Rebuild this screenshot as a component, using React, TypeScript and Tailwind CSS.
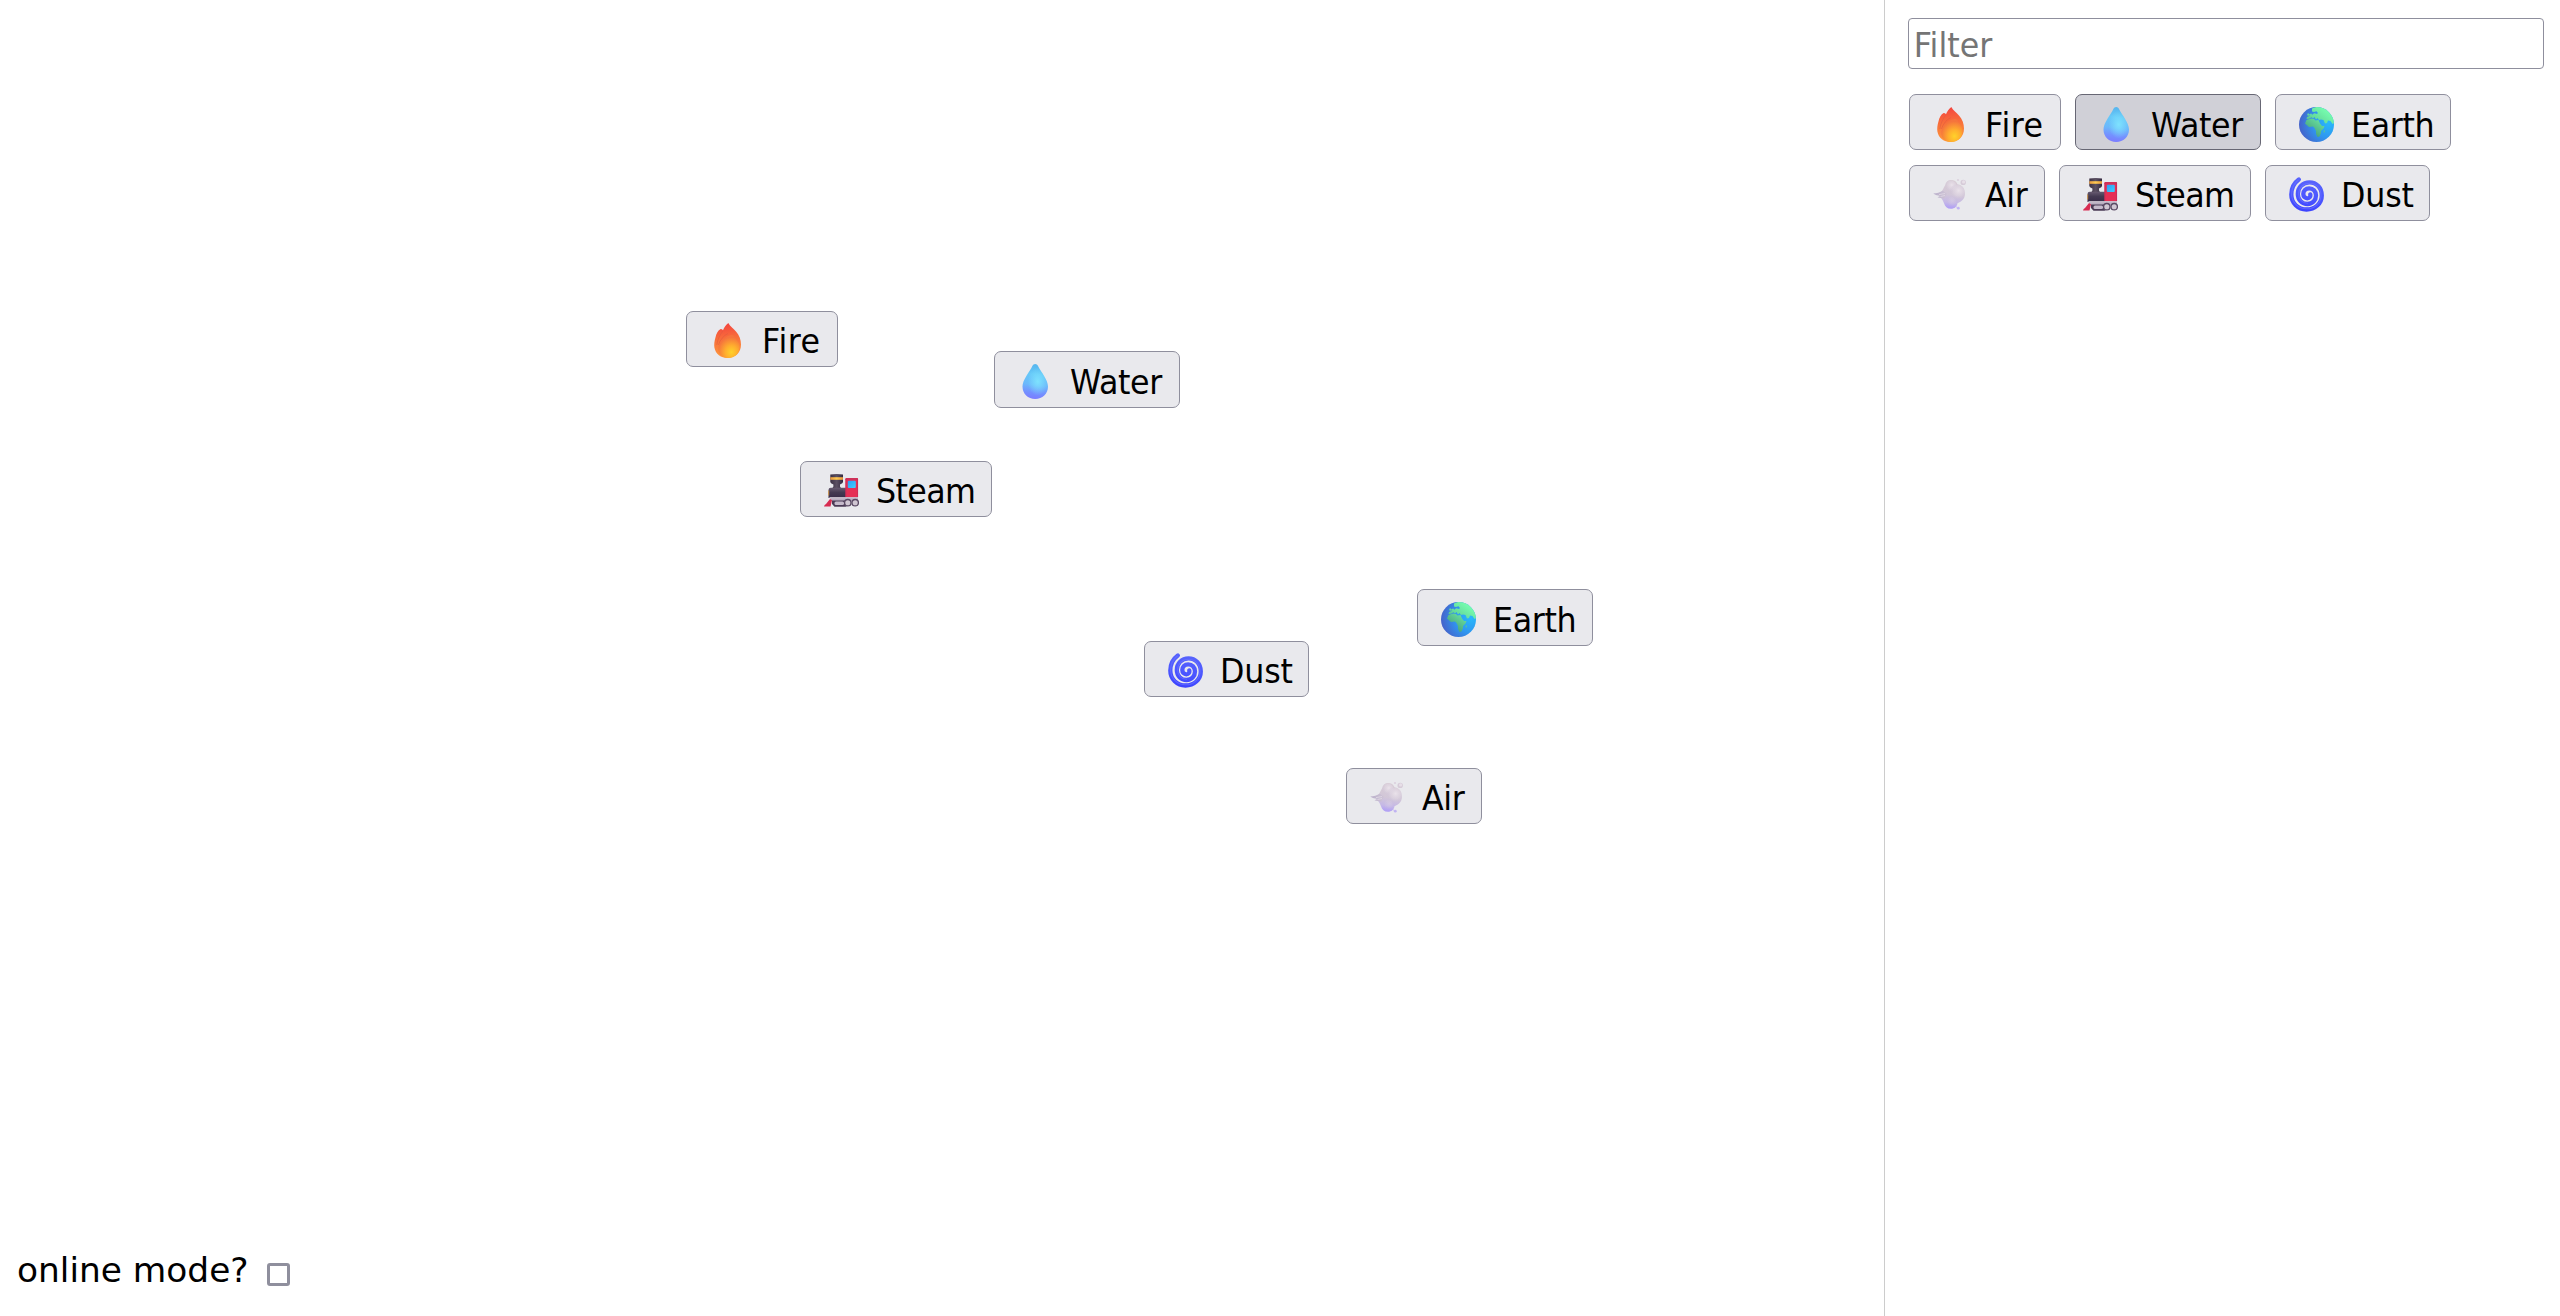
import { useState } from "react";

type Kind = "Fire" | "Water" | "Earth" | "Air" | "Steam" | "Dust";

function Emoji({ kind, uid }: { kind: Kind; uid: string }) {
  const id = (n: string) => `${uid}-${n}`;
  const url = (n: string) => `url(#${uid}-${n})`;
  switch (kind) {
    case "Fire":
      return (
        <svg viewBox="0 0 35 35" className="block size-[35px] shrink-0">
          <defs>
            <linearGradient id={id("a")} x1="0.5" y1="0" x2="0.6" y2="1">
              <stop offset="0" stopColor="#f4443f" />
              <stop offset="0.45" stopColor="#f8703a" />
              <stop offset="1" stopColor="#ff9c3c" />
            </linearGradient>
            <radialGradient id={id("b")} cx="0.62" cy="0.75" r="0.65">
              <stop offset="0" stopColor="#ffd22a" />
              <stop offset="0.45" stopColor="#ffae2e" />
              <stop offset="1" stopColor="#f5743c" />
            </radialGradient>
          </defs>
          <path d="M18.300 0C16 2 14 4.500 13 7.300c-.6-.8-1.300-1.200-2.300-1.200C8 7.500 6.300 10.500 5.600 14 4.300 18 4 21.500 4.400 24.500 5.500 31 11 35 17.500 35 25.500 35 31 29.500 31 21.500c0-5-1.800-9-4.800-12.700C23.500 5.500 20.300 3.500 18.300 0z" fill={url("a")} />
          <path d="M12.800 8c-3 4-5.300 8.500-6 14M18 10.500c-4.500 2-8 6.500-9.500 11.500" fill="none" stroke="#de5a40" strokeWidth="0.900" opacity="0.6" />
          <path d="M19.500 12.500C13 15 8.300 20.500 8.300 26c0 4.800 4 9 9.700 9 6.500 0 11.300-4 11.500-11 .2-5-3-6.500-5-10.500-1.500-1.800-3-1.800-5-1z" fill={url("b")} />
        </svg>
      );
    case "Water":
      return (
        <svg viewBox="0 0 35 35" className="block size-[35px] shrink-0">
          <defs>
            <linearGradient id={id("a")} x1="0.55" y1="0" x2="0.45" y2="1">
              <stop offset="0" stopColor="#56b5ee" />
              <stop offset="0.3" stopColor="#66c8f8" />
              <stop offset="0.6" stopColor="#6cb8fb" />
              <stop offset="0.82" stopColor="#7491ff" />
              <stop offset="1" stopColor="#7b7cff" />
            </linearGradient>
            <radialGradient id={id("b")} cx="0.6" cy="0.5" r="0.4">
              <stop offset="0" stopColor="#80e6ff" stopOpacity="0.9" />
              <stop offset="1" stopColor="#80e6ff" stopOpacity="0" />
            </radialGradient>
          </defs>
          <path d="M17.200 0c-1.300 0-2.100.7-2.700 1.800C11.500 8 4.500 16 4.500 22.500 4.500 29.800 10 35 17.200 35S30 29.800 30 22.500C30 16 23 8 19.900 1.800 19.300.7 18.500 0 17.200 0z" fill={url("a")} />
          <path d="M17.200 0c-1.300 0-2.100.7-2.700 1.800C11.500 8 4.500 16 4.500 22.500 4.500 29.800 10 35 17.200 35S30 29.800 30 22.500C30 16 23 8 19.900 1.800 19.300.7 18.500 0 17.200 0z" fill={url("b")} />
        </svg>
      );
    case "Earth":
      return (
        <svg viewBox="0 0 35 35" className="block size-[35px] shrink-0">
          <defs>
            <radialGradient id={id("a")} cx="0.85" cy="0.45" r="0.85">
              <stop offset="0" stopColor="#28b9fb" />
              <stop offset="0.5" stopColor="#2f97f0" />
              <stop offset="1" stopColor="#4562ca" />
            </radialGradient>
            <linearGradient id={id("b")} x1="30" y1="4" x2="14" y2="26" gradientUnits="userSpaceOnUse">
              <stop offset="0" stopColor="#77ffb0" />
              <stop offset="0.5" stopColor="#66dc9c" />
              <stop offset="1" stopColor="#4ba982" />
            </linearGradient>
            <clipPath id={id("c")}>
              <circle cx="17.500" cy="17.500" r="17.500" />
            </clipPath>
          </defs>
          <circle cx="17.500" cy="17.500" r="17.500" fill={url("a")} />
          <g clipPath={url("c")} fill={url("b")}>
            <path d="M13 1.500l4-1.500h8l6 3 4 7v6l-1.500 1-2-3-2.500-.5-1 2.500-2 .5-1.500-3.500-2.500-.5-2 .5-1.500-2-1.500 1.500-1.500-2.500-1.500 1.500-1.500-1.200-2.500 1.500-2.500.3.500-2.200 2.500-.8-.3-1.800 2-.8 1 1.200 2-1.500 2.800.8 1-1-1.500-1.800-2.500.8-2-.5z" />
            <path d="M7.500 13l4.500-1.500 3 .5 1.500 1.500 3-.5 1.500 3.500 2 2.500h2.500l-1 2.500-2.500 2.500v2l-1.500 3.500-2 .5-1.500-3v-3l-1.500-3-1.500-1.500-4 .500L6 16.500z" />
            <path d="M24.500 24l1-1 .3 1.500-.8 1.800z" />
            <path d="M8 8l1-2 1.500 1.500L9.500 9z" />
          </g>
        </svg>
      );
    case "Air":
      return (
        <svg viewBox="0 0 35 35" className="block size-[35px] shrink-0">
          <defs>
            <linearGradient id={id("a")} x1="20" y1="3" x2="16" y2="32" gradientUnits="userSpaceOnUse">
              <stop offset="0" stopColor="#d8ccd4" />
              <stop offset="0.5" stopColor="#d2c7d8" />
              <stop offset="0.78" stopColor="#c5b8e6" />
              <stop offset="1" stopColor="#ad9bf8" />
            </linearGradient>
            <radialGradient id={id("b")} cx="0.6" cy="0.38" r="0.55">
              <stop offset="0" stopColor="#eae2ea" />
              <stop offset="0.6" stopColor="#dfd6e2" stopOpacity="0.6" />
              <stop offset="1" stopColor="#d0c5db" stopOpacity="0" />
            </radialGradient>
            <linearGradient id={id("c")} x1="0" y1="0" x2="1" y2="0">
              <stop offset="0" stopColor="#b9afca" />
              <stop offset="1" stopColor="#cfc4d6" />
            </linearGradient>
          </defs>
          <path d="M8 15c1.500-1.500 2.500-4 4-6.500C13 4.800 15.200 3 18 3c3.200 0 5.500 1.500 6.500 4.300 4 .7 6.500 3 7 6.500.8 3.500.5 6.500-1.500 8.700-1.500 2-3.500 3-5.500 3.700C24 29.500 21.500 31.700 18 31.700c-3.800 0-6-2-7-5.500-.8-2.200-1.800-3.700-3-5.500z" fill={url("a")} />
          <path d="M.3 16.500c3.500-.2 6.500-1 9.700-2.700l4 3-3 5c-2.200-.8-4.500-.8-6.500-1.600l2.500-1.200c-2.200-.5-4.500-1-6.700-2.500z" fill={url("c")} />
          <path d="M6 17.600l6-1.100M7.500 19.500l4.500-1" stroke="#e2dae6" strokeWidth="0.800" />
          <circle cx="17.500" cy="9.500" r="6.300" fill={url("b")} />
          <circle cx="24" cy="15.500" r="8" fill={url("b")} />
          <circle cx="18" cy="25" r="5" fill={url("b")} opacity="0.3" />
          <circle cx="30.200" cy="5.400" r="2.700" fill="#d6cbd8" />
          <circle cx="30.600" cy="4.900" r="1.600" fill="#e7dfe8" />
          <circle cx="25" cy="3" r="1.100" fill="#dbd1de" />
          <circle cx="25.300" cy="31.200" r="1.400" fill="#c1b3f2" />
          <circle cx="23.500" cy="30" r="0.700" fill="#d0c5f0" />
        </svg>
      );
    case "Steam":
      return (
        <svg viewBox="0 0 35 35" className="block size-[35px] shrink-0">
          <defs>
            <linearGradient id={id("a")} x1="0" y1="0" x2="0" y2="1">
              <stop offset="0" stopColor="#675a70" />
              <stop offset="0.45" stopColor="#443a52" />
              <stop offset="1" stopColor="#382c48" />
            </linearGradient>
            <linearGradient id={id("b")} x1="0" y1="0" x2="1" y2="0">
              <stop offset="0" stopColor="#3b3043" />
              <stop offset="0.5" stopColor="#5c5163" />
              <stop offset="1" stopColor="#33283f" />
            </linearGradient>
            <linearGradient id={id("c")} x1="0" y1="0" x2="1" y2="0">
              <stop offset="0" stopColor="#e9973c" />
              <stop offset="0.5" stopColor="#ffcb52" />
              <stop offset="1" stopColor="#e89739" />
            </linearGradient>
            <linearGradient id={id("d")} x1="0" y1="0" x2="1" y2="1">
              <stop offset="0" stopColor="#2c9df2" />
              <stop offset="1" stopColor="#3fd0ff" />
            </linearGradient>
          </defs>
          <path d="M6.300 1.500Q12.700.5 19 1.500V9q0 1.200-3 2.500v2l1.200 2H8.200l1.200-2v-2Q6.300 10.200 6.300 9z" fill={url("b")} />
          <path d="M6.300 4.200H19v2.600H6.300z" fill={url("c")} />
          <path d="M4.500 17q0-2.200 2.200-2.200H22V25H4.500z" fill={url("a")} />
          <path d="M4.700 17.500v5" stroke="#d5953e" strokeWidth="0.900" />
          <rect x="21.500" y="5" width="12.500" height="19.800" rx="1" fill="#e52f55" />
          <path d="M21.500 6q0-1 1-1H33q1 0 1 1v1H21.500z" fill="#ce3159" />
          <path d="M21.900 6v18M33.600 6v18" stroke="#c42d59" strokeWidth="0.800" />
          <rect x="23.800" y="7.800" width="8" height="7.200" rx="1" fill={url("d")} />
          <path d="M5.500 24.300H34V28H7z" fill="#b9aec1" />
          <path d="M5.500 24.300H34v1H5.500z" fill="#d2cbd5" />
          <path d="M8 27.500h18l-1 4.500-3.500 1.700H10.500L8 31z" fill="#4b3b56" />
          <rect x="10.500" y="28.500" width="9.500" height="3.400" rx="1.500" fill="#c5bacb" />
          <path d="M0 33.500q.3-1.700 2-2.500l4-5 2 1.300-1.500 6.300z" fill="#d82c52" />
          <circle cx="23.800" cy="29.700" r="3.200" fill="#d0c6d2" stroke="#5a4a64" strokeWidth="1.300" />
          <circle cx="31.200" cy="29.700" r="3.200" fill="#d0c6d2" stroke="#5a4a64" strokeWidth="1.300" />
        </svg>
      );
    case "Dust":
      return (
        <svg viewBox="0 0 35 35" className="block size-[35px] shrink-0" fill="none" strokeLinecap="round">
          <defs>
            <linearGradient id={id("a")} x1="20" y1="2" x2="14" y2="34" gradientUnits="userSpaceOnUse">
              <stop offset="0" stopColor="#5864fc" />
              <stop offset="0.55" stopColor="#4b56ff" />
              <stop offset="1" stopColor="#3c43ff" />
            </linearGradient>
          </defs>
          <path d="M9.800 2.500C5 6 2.300 11 2.300 17.500C2.300 26 9 32.500 17.500 32.500C26 32.500 32.800 26.500 32.800 18.500C32.800 10.800 27.500 5.400 20.500 5.400C13.600 5.400 8.800 10.600 8.800 17C8.800 22.800 13 27 18.600 27C23.600 27 27 23.300 27 18.600C27 14.200 24 11.300 20.200 11.300C16.600 11.300 14.300 14 14.300 17C14.300 19.600 16.100 21.300 18.300 21.300C20.600 21.300 21.700 19.500 21.300 17.300" stroke={url("a")} strokeWidth="4.300" />
          <path d="M9.300 3C4.800 6.500 2.600 11.500 2.600 17.500C2.800 25.500 9.300 31.800 17.500 31.800C25.500 31.800 32 26.200 32 18.500C32 11.400 27 6.200 20.500 6.200C14.200 6.200 9.600 11 9.600 17C9.600 22.300 13.500 26.200 18.600 26.200" stroke="#6f76ff" strokeWidth="1.100" opacity="0.6" />
        </svg>
      );
  }
}

const widths: Record<Kind, string> = {
  Fire: "w-[152px]",
  Water: "w-[186px]",
  Earth: "w-[176px]",
  Air: "w-[136px]",
  Steam: "w-[192px]",
  Dust: "w-[165px]",
};

const tracking: Record<Kind, string> = {
  Fire: "tracking-[0.5px]",
  Water: "tracking-[-0.4px]",
  Earth: "tracking-[-0.4px]",
  Air: "tracking-[-0.4px]",
  Steam: "tracking-[-0.7px]",
  Dust: "tracking-[-0.2px]",
};

function ElementButton({ kind, uid, low, tall, active }: { kind: Kind; uid: string; low?: boolean; tall?: boolean; active?: boolean }) {
  return (
    <button
      className={`${widths[kind]} ${tall ? "h-[57px]" : "h-14"} ${low ? "pt-3" : "pt-[11px]"} ${
        active ? "border-[#676774] bg-[#d0d0d7]" : "border-[#8f8f9d] bg-[#e9e9ed]"
      } flex shrink-0 items-start rounded-[7px] border pl-[23px] text-black`}
    >
      <Emoji kind={kind} uid={uid} />
      <span className={`${tracking[kind]} ml-[17px] w-0 origin-left scale-x-[0.925] whitespace-nowrap text-left text-[34.300px] leading-[37px]`}>
        {kind}
      </span>
    </button>
  );
}

const rows: { kinds: Kind[]; low: boolean }[] = [
  { kinds: ["Fire", "Water", "Earth"], low: true },
  { kinds: ["Air", "Steam", "Dust"], low: false },
];

const placed: { kind: Kind; place: string; low?: boolean }[] = [
  { kind: "Fire", place: "left-[686px] top-[311px]" },
  { kind: "Water", place: "left-[994px] top-[351px]", low: true },
  { kind: "Steam", place: "left-[800px] top-[461px]" },
  { kind: "Earth", place: "left-[1417px] top-[589px]", low: true },
  { kind: "Dust", place: "left-[1144px] top-[641px]" },
  { kind: "Air", place: "left-[1346px] top-[768px]" },
];

export default function App() {
  const [filter, setFilter] = useState("");
  return (
    <div className="flex h-screen overflow-hidden bg-white font-['DejaVu_Sans',sans-serif] text-black">
      <main className="relative flex flex-1 flex-col justify-end">
        {placed.map((p) => (
          <div key={p.kind} className={`absolute ${p.place}`}>
            <ElementButton kind={p.kind} uid={`canvas-${p.kind}`} low={p.low} tall={p.low} />
          </div>
        ))}
        <label className="mb-[22px] flex h-12 items-center pl-[17px]">
          <span className="w-[232px] whitespace-nowrap text-[34.400px] leading-[48px]">online mode?</span>
          <input type="checkbox" className="ml-[18px] mt-[9px] size-[23px] appearance-none rounded-[3px] border-3 border-[#8f8f9d] bg-white" />
        </label>
      </main>
      <aside className="flex w-[676px] flex-col border-l border-[#cccccc] pl-[23px] pr-4 pt-[18px]">
        <div className="h-[51px] overflow-hidden rounded-[4px] border border-[#8f8f9d] bg-white">
          <input
            value={filter}
            onChange={(e) => setFilter(e.target.value)}
            placeholder="Filter"
            className="h-full w-[108%] origin-left scale-x-[0.925] bg-transparent pl-[5px] pt-0.5 text-[34.300px] outline-none placeholder:text-[#757575]"
          />
        </div>
        <div className="mt-[25px] flex flex-col gap-[15px] pl-px">
          {rows.map((row) => (
            <div key={row.kinds[0]} className="flex gap-3.5">
              {row.kinds
                .filter((k) => k.toLowerCase().includes(filter.toLowerCase()))
                .map((k) => (
                  <ElementButton key={k} kind={k} uid={`list-${k}`} low={row.low} active={k === "Water"} />
                ))}
            </div>
          ))}
        </div>
      </aside>
    </div>
  );
}
